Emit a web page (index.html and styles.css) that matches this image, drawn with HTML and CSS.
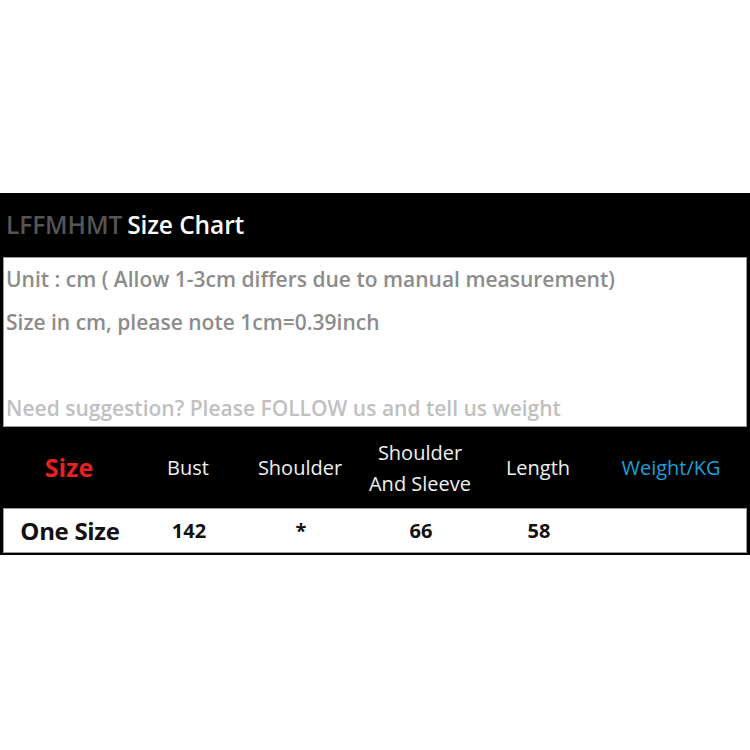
FILE: index.html
```html
<!DOCTYPE html>
<html>
<head>
<meta charset="utf-8">
<link rel="stylesheet" href="styles.css">
</head>
<body>
<div class="chart">
  <div class="title"><span class="brand">LFFMHMT</span> Size Chart</div>
  <div class="notes">
    <p class="note">Unit : cm ( Allow 1-3cm differs due to manual measurement)</p>
    <p class="note">Size in cm, please note 1cm=0.39inch</p>
    <p class="note light">Need suggestion? Please FOLLOW us and tell us weight</p>
  </div>
  <div class="row head">
    <div class="cell size">Size</div>
    <div class="cell">Bust</div>
    <div class="cell">Shoulder</div>
    <div class="cell two">Shoulder<br>And Sleeve</div>
    <div class="cell">Length</div>
    <div class="cell weight">Weight/KG</div>
  </div>
  <div class="row data">
    <div class="cell name">One Size</div>
    <div class="cell">142</div>
    <div class="cell">*</div>
    <div class="cell">66</div>
    <div class="cell">58</div>
    <div class="cell"></div>
  </div>
</div>
</body>
</html>
```
FILE: styles.css
```css
html, body {
  margin: 0;
  padding: 0;
  background: #fff;
}
body {
  font-family: "Open Sans", Lato, sans-serif;
  width: 750px;
  height: 750px;
}
.chart {
  margin-top: 193px;
  width: 750px;
  background: #000;
  padding: 0 3px 2px 3px;
  box-sizing: border-box;
}
.title {
  height: 64px;
  display: flex;
  align-items: center;
  padding-left: 3px;
  padding-bottom: 2px;
  box-sizing: border-box;
  color: #fff;
  font-weight: 600;
  font-size: 24.5px;
  letter-spacing: -0.1px;
}
.brand {
  color: #555;
  margin-right: 5px;
}
.notes {
  background: #fff;
  border: 1px solid #999;
  height: 170px;
  box-sizing: border-box;
  padding-top: 0;
}
.note {
  margin: 0;
  padding-left: 2px;
  color: #8c8c8c;
  font-weight: 600;
  font-size: 21px;
  letter-spacing: 0;
  height: 43px;
  line-height: 43px;
}
.note.light {
  color: #c0c0c0;
  margin-top: 43px;
}
.row {
  display: grid;
  grid-template-columns: 132px 106px 118px 122px 114px 1fr;
}
.head {
  height: 81px;
  background: #000;
  color: #f0f0f0;
  font-size: 20px;
}
.head .cell {
  display: flex;
  align-items: center;
  justify-content: center;
  text-align: center;
  line-height: 31px;
}
.head .size {
  color: #e8201f;
  font-weight: 700;
  font-size: 25px;
}
.head .weight {
  color: #1e9fd9;
}
.data {
  height: 45px;
  background: #fff;
  border: 1px solid #999;
  box-sizing: border-box;
  color: #111;
  font-weight: 700;
  font-size: 20px;
}
.data .cell {
  display: flex;
  align-items: center;
  justify-content: center;
}
.data .name {
  font-size: 24px;
  letter-spacing: -0.3px;
}
```
